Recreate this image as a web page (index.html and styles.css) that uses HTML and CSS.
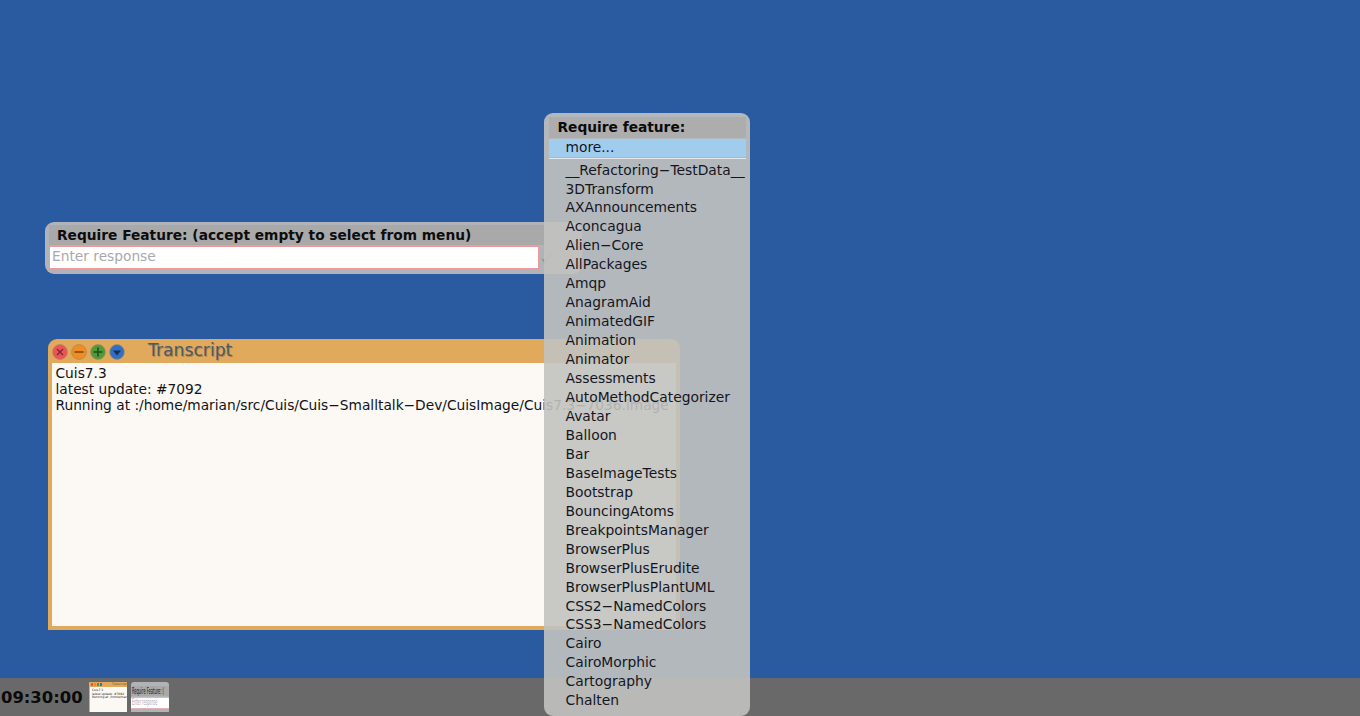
FILE: index.html
```html
<!DOCTYPE html>
<html lang="en">
<head>
<meta charset="utf-8">
<title>Cuis</title>
<link rel="stylesheet" href="styles.css">
</head>
<body>
<main class="desktop">
  <section class="window transcript">
    <header class="win-title">
      <div class="win-buttons">
        <svg class="win-btn" viewBox="0 0 16 16"><circle cx="8" cy="8" r="7.400" fill="#f05058" stroke="#a88a5a" stroke-width=".8"/><path d="M5 5l6 6M11 5l-6 6" stroke="#7a2a30" stroke-width="1.400"/></svg>
        <svg class="win-btn" viewBox="0 0 16 16"><circle cx="8" cy="8" r="7.400" fill="#f08c20" stroke="#a88a5a" stroke-width=".8"/><path d="M3.500 8h9" stroke="#7d4a12" stroke-width="1.600"/></svg>
        <svg class="win-btn" viewBox="0 0 16 16"><circle cx="8" cy="8" r="7.400" fill="#4f9a3a" stroke="#a88a5a" stroke-width=".8"/><path d="M3.500 8h9M8 3.500v9" stroke="#1f4f1a" stroke-width="1.500"/></svg>
        <svg class="win-btn" viewBox="0 0 16 16"><circle cx="8" cy="8" r="7.400" fill="#2f6fc8" stroke="#a88a5a" stroke-width=".8"/><path d="M4 6.500h8l-4 5z" fill="#1c2f50"/></svg>
      </div>
      <span class="win-name">Transcript</span>
    </header>
    <div class="win-body">
      <div>Cuis7.3</div>
      <div>latest update: #7092</div>
      <div>Running at :/home/marian/src/Cuis/Cuis−Smalltalk−Dev/CuisImage/Cuis7.3−7036.image</div>
    </div>
  </section>

  <section class="prompt">
    <div class="prompt-title">Require Feature: (accept empty to select from menu)</div>
    <div class="prompt-row">
      <div class="prompt-input">Enter response</div>
      <svg class="prompt-icon" viewBox="0 0 36 16"><path d="M2 9l3 3 8-10" fill="none" stroke="#5aa860" stroke-width="1.600" opacity=".75"/><path d="M23 2l10 12M33 2l-10 12" stroke="#c09090" stroke-width="2.400" opacity=".7"/></svg>
    </div>
  </section>

  <nav class="menu">
    <div class="menu-title">Require feature:</div>
    <div class="menu-more">more...</div>
    <div class="menu-sep"></div>
    <ul class="menu-list">
      <li>__Refactoring−TestData__</li>
      <li>3DTransform</li>
      <li>AXAnnouncements</li>
      <li>Aconcagua</li>
      <li>Alien−Core</li>
      <li>AllPackages</li>
      <li>Amqp</li>
      <li>AnagramAid</li>
      <li>AnimatedGIF</li>
      <li>Animation</li>
      <li>Animator</li>
      <li>Assessments</li>
      <li>AutoMethodCategorizer</li>
      <li>Avatar</li>
      <li>Balloon</li>
      <li>Bar</li>
      <li>BaseImageTests</li>
      <li>Bootstrap</li>
      <li>BouncingAtoms</li>
      <li>BreakpointsManager</li>
      <li>BrowserPlus</li>
      <li>BrowserPlusErudite</li>
      <li>BrowserPlusPlantUML</li>
      <li>CSS2−NamedColors</li>
      <li>CSS3−NamedColors</li>
      <li>Cairo</li>
      <li>CairoMorphic</li>
      <li>Cartography</li>
      <li>Chalten</li>
    </ul>
  </nav>

  <footer class="taskbar">
    <time class="clock">09:30:00</time>
    <div class="thumb thumb-transcript">
      <div class="thumb-head">
        <i class="dot dot-red"></i><i class="dot dot-orange"></i><i class="dot dot-green"></i><i class="dot dot-blue"></i>
        <span class="thumb-name">Transcript</span>
      </div>
      <div class="thumb-text">Cuis7.3<br>latest update: #7092<br>Running at :/home/mari</div>
    </div>
    <div class="thumb thumb-prompt">
      <div class="thumb-ptitle"><span class="thumb-squeeze">Require Feature: (</span></div>
      <div class="thumb-pinput"><span class="thumb-squeeze">Enter response</span></div>
    </div>
  </footer>
</main>
</body>
</html>
```
FILE: styles.css
```css
* { box-sizing: border-box; }
html, body { margin: 0; height: 100%; overflow: hidden; }
body { font-family: "DejaVu Sans", sans-serif; }

.desktop {
  position: relative;
  width: 1360px;
  height: 716px;
  background: #2a5aa0;
  display: flex;
  flex-direction: column;
  justify-content: flex-end;
  overflow: hidden;
}

/* Transcript window */
.window {
  position: absolute;
  left: 48px;
  top: 339px;
  width: 632px;
  height: 291px;
  background: #e0a95b;
  border-radius: 9px 9px 0 0;
  padding: 0 4px 4px;
  display: flex;
  flex-direction: column;
}
.win-title {
  height: 24px;
  flex: none;
  display: flex;
  align-items: center;
}
.win-buttons { display: flex; gap: 3px; margin-top: 1px; }
.win-btn { width: 16px; height: 16px; display: block; }
.win-name {
  margin-left: 23px;
  margin-top: -3px;
  font-size: 17.200px;
  color: #4b5a68;
  text-shadow: 1px 1px 0 rgba(120, 100, 70, .5);
}
.win-body {
  flex: 1;
  background: #fcf8f3;
  padding: 2px 3.500px;
  font-size: 13.750px;
  line-height: 16px;
  color: #10131a;
  white-space: nowrap;
  overflow: hidden;
}

/* Prompt */
.prompt {
  position: absolute;
  left: 45px;
  top: 222px;
  width: 537px;
  height: 52px;
  background: #b0b3b9;
  border-radius: 9px;
  padding: 3px 4px;
}
.prompt-title {
  height: 20px;
  background: #a9a9a9;
  padding-left: 8px;
  font-size: 13.750px;
  font-weight: 700;
  line-height: 20px;
  color: #0d0d0d;
  white-space: nowrap;
}
.prompt-row {
  display: flex;
  align-items: center;
  margin-top: 1px;
}
.prompt-input {
  width: 490px;
  height: 23px;
  background: #fff;
  border: 1px solid #ee9a9a;
  padding-left: 2px;
  font-size: 13.750px;
  line-height: 19px;
  color: #a8a8ac;
}
.prompt-icon { width: 36px; height: 16px; margin-left: 1px; }

/* Popup menu */
.menu {
  position: absolute;
  left: 544px;
  top: 113px;
  width: 206px;
  height: 603px;
  background: rgba(194, 194, 192, .9);
  border-radius: 9px;
  padding: 4px 4px 4px 5px;
  color: #14161e;
  white-space: nowrap;
}
.menu-title {
  height: 21px;
  background: #adadad;
  padding-left: 8.500px;
  font-size: 13.750px;
  font-weight: 700;
  line-height: 21px;
  color: #0b0b0b;
}
.menu-more {
  height: 18px;
  margin-top: 1px;
  background: #a0cdee;
  padding-left: 16.500px;
  font-size: 13.800px;
  line-height: 17px;
}
.menu-sep {
  height: 1px;
  margin-top: 1px;
  background: #e4e6ea;
}
.menu-list {
  list-style: none;
  margin: 1.580px 0 0;
  padding: 0 0 0 16.500px;
  font-size: 13.850px;
  line-height: 18.950px;
}

/* Taskbar */
.taskbar {
  height: 38px;
  background: #696969;
  display: flex;
  align-items: center;
  padding-left: 1px;
}
.clock {
  width: 88px;
  font-size: 16.400px;
  font-weight: 700;
  color: #0a0a0a;
  white-space: nowrap;
}
.thumb {
  width: 38px;
  height: 30px;
  margin-right: 4px;
  overflow: hidden;
  white-space: nowrap;
}
.thumb-transcript { background: #fcf8f3; border-left: 1px solid #e0a95b; }
.thumb-head {
  height: 5px;
  background: #e0a95b;
  display: flex;
  align-items: center;
  gap: 1px;
  padding-left: 1px;
}
.dot { width: 2px; height: 3px; display: block; }
.dot-red { background: #e8505a; }
.dot-orange { background: #ee8a22; }
.dot-green { background: #4f9a3a; }
.dot-blue { background: #2f6fc8; }
.thumb-name { margin-left: 9px; font-size: 3px; line-height: 5px; color: #5a5a50; }
.thumb-text { padding: 2px; font-size: 3px; line-height: 3.500px; color: #222; }
.thumb-prompt { background: #b0b3b9; border-radius: 3px 3px 0 0; padding-top: 4px; }
.thumb-ptitle {
  height: 10px;
  background: #a9a9a9;
  font-size: 8.500px;
  line-height: 10px;
  color: #111;
  padding-left: 1px;
  overflow: hidden;
}
.thumb-pinput {
  height: 12px;
  margin-top: 1px;
  background: #fff;
  border-top: 1px solid #e4b4b4;
  border-bottom: 1px solid #e4b4b4;
  font-size: 8px;
  line-height: 10px;
  color: #a8a8ac;
  padding-left: 1px;
  overflow: hidden;
}
.thumb-squeeze {
  display: inline-block;
  transform: scaleX(.42);
  transform-origin: left center;
}
```
